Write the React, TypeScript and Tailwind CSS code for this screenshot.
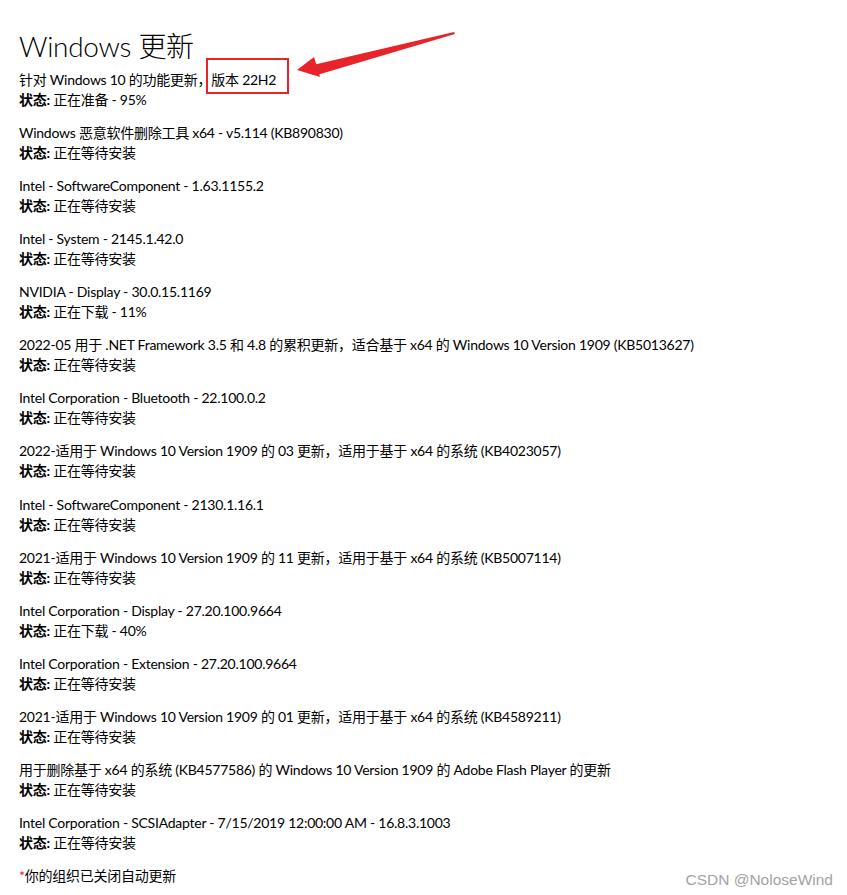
import React from "react";

const items: [string, string][] = [
  ["Windows 恶意软件删除工具 x64 - v5.114 (KB890830)", "正在等待安装"],
  ["Intel - SoftwareComponent - 1.63.1155.2", "正在等待安装"],
  ["Intel - System - 2145.1.42.0", "正在等待安装"],
  ["NVIDIA - Display - 30.0.15.1169", "正在下载 - 11%"],
  ["2022-05 用于 .NET Framework 3.5 和 4.8 的累积更新，适合基于 x64 的 Windows 10 Version 1909 (KB5013627)", "正在等待安装"],
  ["Intel Corporation - Bluetooth - 22.100.0.2", "正在等待安装"],
  ["2022-适用于 Windows 10 Version 1909 的 03 更新，适用于基于 x64 的系统 (KB4023057)", "正在等待安装"],
  ["Intel - SoftwareComponent - 2130.1.16.1", "正在等待安装"],
  ["2021-适用于 Windows 10 Version 1909 的 11 更新，适用于基于 x64 的系统 (KB5007114)", "正在等待安装"],
  ["Intel Corporation - Display - 27.20.100.9664", "正在下载 - 40%"],
  ["Intel Corporation - Extension - 27.20.100.9664", "正在等待安装"],
  ["2021-适用于 Windows 10 Version 1909 的 01 更新，适用于基于 x64 的系统 (KB4589211)", "正在等待安装"],
  ["用于删除基于 x64 的系统 (KB4577586) 的 Windows 10 Version 1909 的 Adobe Flash Player 的更新", "正在等待安装"],
  ["Intel Corporation - SCSIAdapter - 7/15/2019 12:00:00 AM - 16.8.3.1003", "正在等待安装"],
];

function Status({ text }: { text: string }) {
  return (
    <div className="leading-[20px]">
      <span className="font-bold">状态:</span> {text}
    </div>
  );
}

export default function App() {
  return (
    <div
      className="relative w-[847px] h-[895px] bg-white text-black overflow-hidden"
      style={{ fontFamily: '"Segoe UI", Lato, "Noto Sans CJK SC", sans-serif' }}
    >
      <div className="pl-[19px] pt-[28px] text-[14px] tracking-[-0.25px]">
        <h1 className="text-[28px] font-light leading-[36px] mb-[6px] tracking-[-0.3px]">Windows 更新</h1>
        <div className="mb-[13.07px]">
          <div className="leading-[20px]">
            针对 Windows 10 的功能更新，
            <span className="relative">
              版本 22H2
              <span className="absolute left-[-5px] right-[-13px] top-[-13px] bottom-[-6px] border-2 border-[#e8232a]" />
              <svg
                className="absolute left-[78px] top-[-42px]"
                width="175"
                height="60"
                viewBox="0 0 175 60"
              >
                <polygon points="165,3 166,5 28,46 24,36" fill="#e8232a" />
                <polygon points="8,41 25,28 31,48" fill="#e8232a" />
              </svg>
            </span>
          </div>
          <Status text="正在准备 - 95%" />
        </div>
        {items.map(([t, s], i) => (
          <div key={i} className="mb-[13.07px]">
            <div className="leading-[20px] whitespace-nowrap">{t}</div>
            <Status text={s} />
          </div>
        ))}
        <div className="leading-[20px]">
          <span className="text-[#e81123]">*</span>你的组织已关闭自动更新
        </div>
      </div>
      <div
        className="absolute right-[14px] bottom-[4px] text-[15.5px] text-[#a3a3a3]"
        style={{ fontFamily: '"Liberation Sans", "Noto Sans", sans-serif' }}
      >
        CSDN @NoloseWind
      </div>
    </div>
  );
}
